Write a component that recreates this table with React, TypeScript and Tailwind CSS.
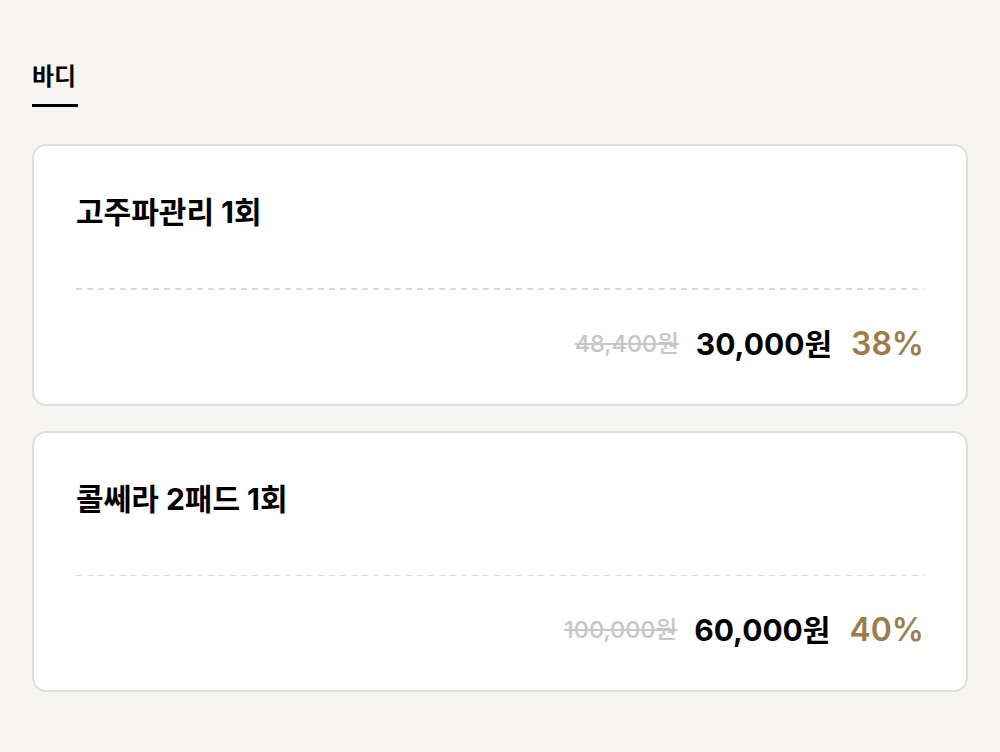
const products = [
  { name: "고주파관리 1회", original: "48,400원", price: "30,000원", rate: "38%" },
  { name: "콜쎄라 2패드 1회", original: "100,000원", price: "60,000원", rate: "40%" },
];

export default function App() {
  return (
    <div
      className="min-h-[752px] w-full bg-[#f6f5f1] px-[32px] pt-[61px]"
      style={{ fontFamily: "Inter, 'Noto Sans CJK KR', sans-serif" }}
    >
      {/* 탭 */}
      <div className="inline-flex flex-col">
        <span className="text-[24px] font-bold leading-[32px] text-black">바디</span>
        <span className="mt-[11px] h-[3px] w-[46px] bg-black" />
      </div>

      {/* 상품 목록 */}
      <div className="mt-[37px] flex flex-col gap-[25px]">
        {products.map((p) => (
          <div
            key={p.name}
            className="rounded-[14px] border-2 border-[#dedede] bg-white px-[42px] pt-[48px] pb-[41px]"
          >
            <h3 className="text-[30px] font-bold leading-[36px] text-black">{p.name}</h3>
            <div className="mt-[58px] h-[1.5px] bg-[repeating-linear-gradient(to_right,#d9d9d9_0,#d9d9d9_6px,transparent_6px,transparent_11px)]" />
            <div className="mt-[35px] flex items-center justify-end leading-[38px]">
              <span className="text-[23.5px] font-medium text-[#c6c6c6] line-through">
                {p.original}
              </span>
              <span className="ml-[17px] text-[30px] font-bold text-black">{p.price}</span>
              <span className="ml-[19px] text-[32px] font-semibold text-[#9d7c4c]">{p.rate}</span>
            </div>
          </div>
        ))}
      </div>
    </div>
  );
}
